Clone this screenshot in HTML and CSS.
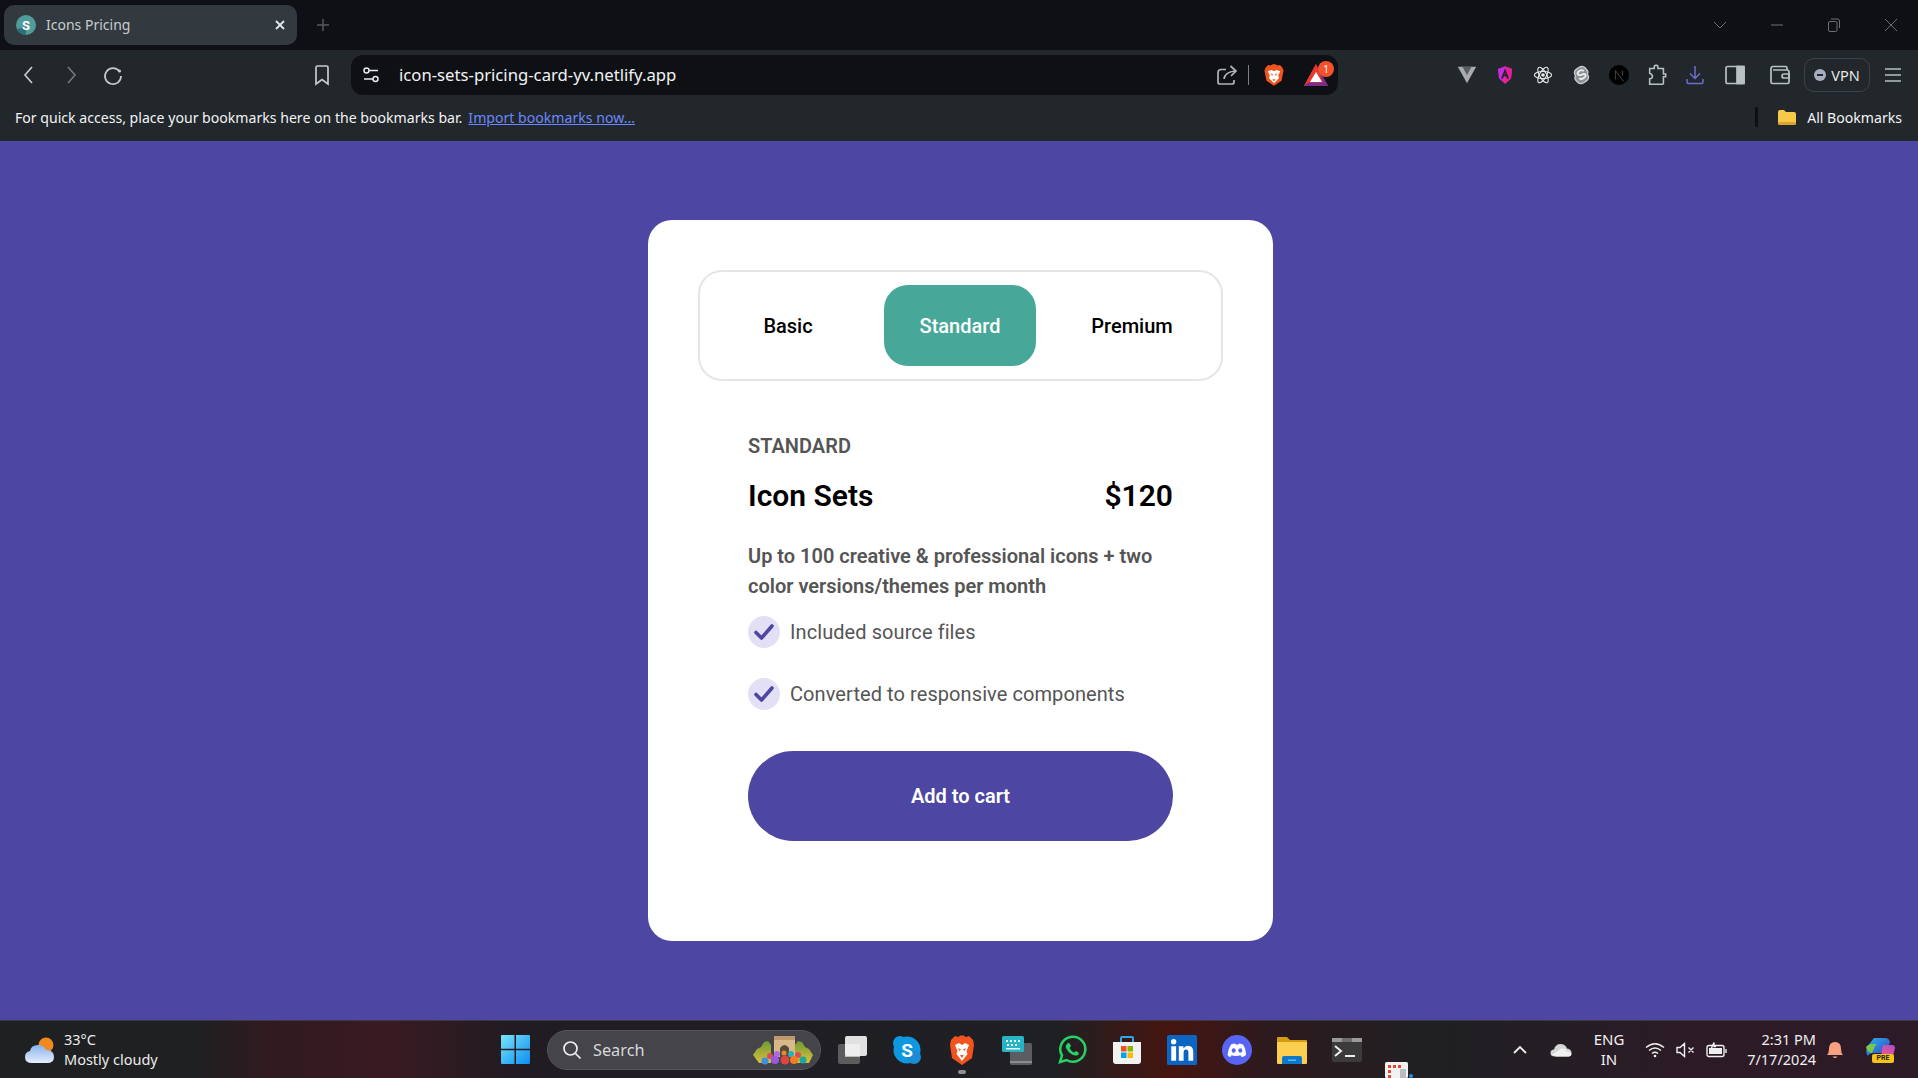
FILE: index.html
```html
<!DOCTYPE html>
<html lang="en">
<head>
  <meta charset="UTF-8">
  <meta name="viewport" content="width=device-width, initial-scale=1.0">
  <title>Icons Pricing</title>
  <link rel="stylesheet" href="styles.css">
</head>
<body>

  <!-- browser tabs -->
  <div class="tabbar">
    <div class="tab">
      <svg class="favicon" viewBox="0 0 20 20"><circle cx="10" cy="10" r="10" fill="#4f9c9a"/><path d="M10 20a10 10 0 0 1-9-6l9-2z" fill="#2f6f78"/><text x="10" y="14.5" text-anchor="middle" class="favicon-s">S</text></svg>
      <span class="tab-title">Icons Pricing</span>
      <svg class="tab-close" viewBox="0 0 12 12"><path d="M2 2l8 8M10 2l-8 8"/></svg>
    </div>
    <svg class="tab-new" viewBox="0 0 14 14"><path d="M7 1v12M1 7h12"/></svg>
    <div class="window-controls">
      <svg class="win-btn" viewBox="0 0 14 14"><path d="M1 4l6 6 6-6"/></svg>
      <svg class="win-btn" viewBox="0 0 14 14"><path d="M1 7h12"/></svg>
      <svg class="win-btn" viewBox="0 0 14 14"><rect x="1.5" y="3.5" width="8.5" height="10" rx="1.5"/><path d="M4 1h6.500q2 0 2 2v7"/></svg>
      <svg class="win-btn" viewBox="0 0 14 14"><path d="M1 1l12 12M13 1L1 13"/></svg>
    </div>
  </div>

  <!-- address bar row -->
  <div class="toolbar">
    <div class="nav-group">
      <span class="nav-btn"><svg class="ico" viewBox="0 0 22 22"><path d="M14 3l-7 8 7 8"/></svg></span>
      <span class="nav-btn dim"><svg class="ico" viewBox="0 0 22 22"><path d="M8 3l7 8-7 8"/></svg></span>
      <span class="nav-btn"><svg class="ico" viewBox="0 0 22 22"><path d="M17.500 7.500A8 8 0 1 0 19 12"/><circle cx="17.500" cy="7" r="1.600" fill="#c6cacd" stroke="none"/></svg></span>
    </div>
    <span class="bookmark-btn"><svg class="ico" viewBox="0 0 22 22"><path d="M5 3.500q0-1.500 1.500-1.500h9q1.500 0 1.500 1.500V20l-6-4.500L5 20z"/></svg></span>
    <div class="addressbar">
      <svg class="site-ico" viewBox="0 0 18 18"><circle cx="4.500" cy="4.500" r="2.500"/><path d="M7 4.500h9M2 13h9"/><circle cx="13.500" cy="13" r="2.500"/></svg>
      <span class="url">icon-sets-pricing-card-yv.netlify.app</span>
      <svg class="ico share" viewBox="0 0 22 22"><path d="M10 5.500H5q-3 0-3 3V18q0 2 2 2h12q2 0 2-2v-2"/><path d="M8 15q1-7 11-8M14.500 2L20 7l-5 5" /></svg>
      <span class="addr-divider"></span>
      <svg class="brave-small" viewBox="0 0 24 26"><path d="M12 26L3 20 .5 8 2 4l3-3 3 .5L10.500 0h3L16 1.500 19 1l3 3 1.500 4L21 20z" fill="#f1541f"/><path d="M4.500 8.500L9 7l3 1.500L15 7l4.500 1.500L17 13.500l1 3-6 6.500-6-6.500 1-3z" fill="#fff"/><path d="M8 11l3 1.500-1.500 1.500zM16 11l-3 1.500 1.500 1.500zM10 18h4l-2 2.500z" fill="#f1541f"/></svg>
      <span class="bat">
        <svg class="bat-ico" viewBox="0 0 24 22"><path d="M12 0l12 22H0z" fill="#e8392c"/><path d="M12 0l12 22H0l4-3.500h15z" fill="#7b2d8f"/><path d="M12 0L0 22l4-3.500L12 4z" fill="#e8392c"/><path d="M12 8l6 10H6z" fill="#fff"/></svg>
        <span class="bat-badge">1</span>
      </span>
    </div>
    <div class="ext-group">
      <span class="ext"><svg class="ext-ico" viewBox="0 0 24 22"><path d="M1 1h22L12 21z" fill="#a9abac"/><path d="M6.500 1L12 11l5.500-10z" fill="#5a5e60"/></svg></span>
      <span class="ext"><svg class="ext-ico angular" viewBox="0 0 20 22"><path d="M10 0L1 3.500l1.500 12L10 22l7.500-6.500 1.500-12z" fill="#c42ce0"/><path d="M10 0v22l7.500-6.500 1.500-12z" fill="#e0218f"/><path d="M10 3L5 15.500h2.500l1-3h3l1 3H15zM9.200 10.500L10 8l.8 2.500z" fill="#1e2226"/><path d="M5.500 16.500h9L10 21z" fill="#ff1a8c"/></svg></span>
      <span class="ext"><svg class="ext-ico react" viewBox="0 0 22 22"><circle cx="11" cy="11" r="2" fill="#e8eaeb" stroke="none"/><ellipse cx="11" cy="11" rx="9.500" ry="3.800"/><ellipse cx="11" cy="11" rx="9.500" ry="3.800" transform="rotate(60 11 11)"/><ellipse cx="11" cy="11" rx="9.500" ry="3.800" transform="rotate(120 11 11)"/></svg></span>
      <span class="ext"><svg class="ext-ico svelte" viewBox="0 0 18 22"><path d="M15 5C13 1.500 9.500 1 7 2.500L4 4.500C1.500 6 1 9.500 3 12c-1 2-.5 4.500 1.500 6C6.500 21 10 21 12 19.500l3-2c2.500-1.500 3-5 1-7.500 1-1.500.5-3.500-1-5z"/><path d="M12 6.500q-2-1.500-4-.5l-2 1.500q-1.500 1.500 0 3 1 1 3 .5l2.500-1q2-.5 2.500 1 .5 1.500-1 2.500l-2 1.500q-2 1-4-.5" class="svelte-s"/></svg></span>
      <span class="ext"><svg class="ext-ico" viewBox="0 0 22 22"><circle cx="11" cy="11" r="11" fill="#000"/><path d="M7 16V6l9 12M15 6v6" fill="none" stroke="#4a4d50" stroke-width="1"/></svg></span>
      <span class="ext"><svg class="ico tone" viewBox="0 0 22 24"><path d="M3 5h5V3q0-1.500 1.500-1.500h1Q12 1.500 12 3v2h6v6h2.500v3H18v7q0 1-1 1H3v-6q3 0 3-2.500T3 10z"/></svg></span>
      <span class="ext"><svg class="ico violet" viewBox="0 0 22 22"><path d="M11 2v12M6 9.500l5 5 5-5M3 15v3q0 1.500 1.500 1.500h13Q19 19.500 19 18v-3"/></svg></span>
      <span class="ext sidebar"><svg class="ico tone" viewBox="0 0 22 22"><rect x="2" y="2.500" width="18" height="17" rx="1.500"/><rect x="13" y="2.500" width="7" height="17" fill="#b8c0c4"/></svg></span>
      <span class="ext wallet"><svg class="ico tone" viewBox="0 0 22 22"><path d="M18 6V4q0-1.500-1.500-1.500H4Q2 2.500 2 5v13q0 1.500 1.500 1.500h15q1.500 0 1.500-1.500V8q0-2-2-2H4"/><path d="M20 10h-5q-2 0-2 2t2 2h5z"/></svg></span>
    </div>
    <div class="vpn-btn"><span class="vpn-dot"></span>VPN</div>
    <svg class="ico menu" viewBox="0 0 18 18"><path d="M1 3h16M1 9h16M1 15h16"/></svg>
  </div>

  <!-- bookmarks bar -->
  <div class="bookmarks">
    <span>For quick access, place your bookmarks here on the bookmarks bar.</span>
    <a class="import-link" href="#">Import bookmarks now...</a>
    <span class="bm-divider"></span>
    <svg class="bm-folder" viewBox="0 0 20 17"><path d="M1 3q0-2 2-2h4l2 2h8q2 0 2 2v9q0 2-2 2H3q-2 0-2-2z" fill="#f7c948"/><path d="M1 13h18v1q0 2-2 2H3q-2 0-2-2z" fill="#d9a52c"/></svg>
    <span>All Bookmarks</span>
  </div>

  <!-- pricing card -->
  <main class="page">
    <section class="card">
      <div class="plan-tabs">
        <button class="plan-tab">Basic</button>
        <button class="plan-tab active">Standard</button>
        <button class="plan-tab">Premium</button>
      </div>
      <div class="plan">
        <p class="plan-name">STANDARD</p>
        <div class="plan-head">
          <h2>Icon Sets</h2>
          <span>$120</span>
        </div>
        <p class="plan-desc">Up to 100 creative &amp; professional icons + two color versions/themes per month</p>
        <ul class="features">
          <li><span class="check"><svg viewBox="0 0 20 20"><path d="M2 10.500l5.500 5.500L18 4"/></svg></span>Included source files</li>
          <li><span class="check"><svg viewBox="0 0 20 20"><path d="M2 10.500l5.500 5.500L18 4"/></svg></span>Converted to responsive components</li>
        </ul>
        <button class="add-btn">Add to cart</button>
      </div>
    </section>
  </main>

  <!-- windows taskbar -->
  <footer class="taskbar">
    <div class="weather">
      <svg class="weather-ico" viewBox="0 0 32 28"><defs><linearGradient id="cloud" x1="0" y1="0" x2="0" y2="1"><stop offset="0" stop-color="#86b2ee"/><stop offset="1" stop-color="#e6eefb"/></linearGradient></defs><circle cx="22" cy="9" r="7.500" fill="#f08a1d"/><path d="M8 27q-7 0-7-6 0-5 5-6 1-6 8-6 6 0 8 5 8 0 8 7 0 6-7 6z" fill="url(#cloud)"/></svg>
      <div class="weather-text">
        <span>33°C</span>
        <span>Mostly cloudy</span>
      </div>
    </div>
    <div class="task-center">
      <svg class="start" viewBox="0 0 29 29"><defs><linearGradient id="winblue" x1="0" y1="0" x2="1" y2="1"><stop offset="0" stop-color="#7be3fb"/><stop offset="1" stop-color="#0a8ff0"/></linearGradient></defs><path d="M0 1q0-1 1-1h12.500v13.700H0zM15 0h13q1 0 1 1v12.700H15zM0 15.300h13.500V29H1q-1 0-1-1zM15 15.300h14V28q0 1-1 1H15z" fill="url(#winblue)"/></svg>
      <div class="search">
        <svg class="search-ico" viewBox="0 0 20 20"><circle cx="8.500" cy="8.500" r="6.500"/><path d="M13.500 13.500l5 5"/></svg>
        <span class="search-text">Search</span>
        <svg class="search-art" viewBox="0 0 60 30"><defs><linearGradient id="bush" x1="0" y1="0" x2="0" y2="1"><stop offset="0" stop-color="#6f9a34"/><stop offset="1" stop-color="#d8c03c"/></linearGradient></defs><path d="M0 20l4-6 4-2 3-5 4-1 3 4v18H6zM60 20l-4-6-4-2-3-5-4-1-3 4v18h14z" fill="url(#bush)"/><path d="M21 3h21v19H21z" fill="#d8b98a"/><path d="M21 1h21v4H21z" fill="#c09a6c"/><path d="M27 22v-9q4.500-6 9 0v9z" fill="#5a4a3c"/><circle cx="17" cy="21" r="3" fill="#d94c55"/><circle cx="24" cy="19" r="3" fill="#a76be0"/><circle cx="31" cy="18" r="2.500" fill="#e68a2e"/><circle cx="38" cy="19" r="3" fill="#27b1b8"/><circle cx="45" cy="20" r="3" fill="#d94c55"/><circle cx="12" cy="26" r="3.500" fill="#3f8fe0"/><circle cx="22" cy="25" r="4" fill="#9a58e2"/><circle cx="32" cy="25" r="4.500" fill="#d9453f"/><circle cx="41" cy="25" r="4" fill="#ef7d22"/><circle cx="50" cy="25" r="3.500" fill="#1ba6a0"/></svg>
      </div>
      <div class="task-icons">
        <span class="task-app"><svg viewBox="0 0 30 30"><rect x="1" y="9" width="22" height="20" rx="2" fill="#5c5c5c"/><rect x="8" y="9" width="15" height="13" fill="#bdbdbd"/><rect x="8" y="1" width="22" height="20" rx="2" fill="#f2f2f2" opacity=".92"/></svg></span>
        <span class="task-app"><svg viewBox="0 0 30 30"><circle cx="15" cy="15" r="13.500" fill="#0e98e0"/><circle cx="8" cy="8" r="7" fill="#0e98e0"/><circle cx="22" cy="22" r="7" fill="#1b8bd6"/><text x="15" y="22" text-anchor="middle" class="skype-s">S</text></svg></span>
        <span class="task-app running"><svg viewBox="0 0 26 30"><path d="M13 30L3 23 1 10l1-5 4-4 3 1 2.500-1.500h3L17 2l3-1 4 4 1 5-2 13z" fill="#f1541f"/><path d="M6 10l4-2 3 2 3-2 4 2-2.500 6 1 3L13 26l-5.500-7 1-3z" fill="#fff"/><path d="M9 13l3 1.500-1.500 1.500zM17 13l-3 1.500 1.500 1.500zM11 20h4l-2 3z" fill="#f1541f"/></svg></span>
        <span class="task-app"><svg viewBox="0 0 30 30"><rect x="8" y="8" width="22" height="22" rx="1.500" fill="#5b5e61"/><rect x="8" y="26" width="22" height="2" fill="#8a8d90"/><rect x="0" y="1" width="22" height="16" rx="1.500" fill="#27b4c6"/><path d="M4 5h2v2H4zM8 5h2v2H8zM12 5h2v2h-2zM16 5h2v2h-2zM5 9h2v2H5zM9 9h2v2H9zM13 9h2v2h-2zM4 13h14v1.500H4z" fill="#e8f9fb"/></svg></span>
        <span class="task-app"><svg class="whatsapp" viewBox="0 0 30 30"><path d="M3 27l2-6.500A12.500 12.500 0 1 1 9.500 25z"/><path d="M10 9q1.500-2 3 0l1 2-1.500 2q1.500 3 4.500 4.500l2-1.500 2 1.200q2 1.500-.5 3-2 1-5.500-.7-4-2-6-6.500-1-2.500 1-4z" class="whatsapp-fill"/></svg></span>
        <span class="task-app"><svg viewBox="0 0 30 30"><path d="M9 7V3q0-1 1-1h10q1 0 1 1v4" fill="none" stroke="#2aa8e8" stroke-width="2"/><path d="M1 7h28v19q0 3-3 3H4q-3 0-3-3z" fill="#f2f2f2"/><rect x="9" y="11" width="5.500" height="5.500" fill="#f25022"/><rect x="15.500" y="11" width="5.500" height="5.500" fill="#7fba00"/><rect x="9" y="17.500" width="5.500" height="5.500" fill="#00a4ef"/><rect x="15.500" y="17.500" width="5.500" height="5.500" fill="#ffb900"/></svg></span>
        <span class="task-app"><svg viewBox="0 0 28 28"><rect width="28" height="28" rx="1.500" fill="#0a66c2"/><rect x="4" y="10.500" width="4.500" height="13.500" fill="#fff"/><circle cx="6.200" cy="6.300" r="2.500" fill="#fff"/><path d="M11 10.500h4.300v2q1.500-2.400 4.200-2.400 5 0 5 5.800V24H20v-7.500q0-3-2.300-3-2.200 0-2.200 3V24H11z" fill="#fff"/></svg></span>
        <span class="task-app"><svg viewBox="0 0 30 30"><circle cx="15" cy="15" r="15" fill="#5865f2"/><path d="M9 9.500q3-1.200 4-1l.5 1h3l.5-1q1 0 4 1 3 4.500 3 10.500-2 1.800-4.500 2l-1-1.700q-4.500 1.300-9 0l-1 1.700Q7 21.800 5.500 20 6 14 9 9.500z" fill="#fff"/><ellipse cx="11.700" cy="15.500" rx="2" ry="2.200" fill="#5865f2"/><ellipse cx="18.300" cy="15.500" rx="2" ry="2.200" fill="#5865f2"/></svg></span>
        <span class="task-app"><svg viewBox="0 0 30 30"><path d="M0 3q0-1 1-1h9l3 3h16q1 0 1 1v5H0z" fill="#d79b13"/><path d="M0 7h30v21q0 1-1 1H1q-1 0-1-1z" fill="#fbcf4f"/><path d="M5 23q0-2 2-2h16q2 0 2 2v6H5z" fill="#0f78c8"/><rect x="11" y="24.500" width="8" height="1.500" fill="#5cb9ee"/></svg></span>
        <span class="task-app"><svg viewBox="0 0 30 26"><rect y="1" width="30" height="24" rx="2" fill="#3b3b3b"/><rect y="1" width="30" height="4" fill="#9a9a9a"/><rect x="10" y="1" width="10" height="4" fill="#6d6d6d"/><path d="M3 9l6 5-6 5" fill="none" stroke="#eee" stroke-width="2"/><rect x="13" y="18" width="10" height="2" fill="#eee"/></svg></span>
        <span class="task-app clipped"><svg viewBox="0 0 28 16"><rect width="23" height="16" rx="1.500" fill="#f2f2f2"/><path d="M3 3h3v3H3zM8 3h3v3H8zM13 3h3v3h-3zM3 8h3v3H3zM3 13h3v3H3z" fill="#e0492a"/><rect x="15" y="7" width="6" height="9" fill="#b9bdc2"/><circle cx="26" cy="14" r="2" fill="#1f8fe0"/></svg></span>
      </div>
    </div>
    <div class="tray">
      <svg class="tray-ico chev" viewBox="0 0 16 16"><path d="M2 11l6-6 6 6"/></svg>
      <svg class="tray-cloud" viewBox="0 0 22 14"><path d="M5 13.500q-4.500 0-4.500-3.500T4 6.500Q5.500 1 10.500 1T17 5.500q4.500.5 4.500 4.500t-3.500 3.500z" fill="#d6d6d6"/><path d="M8 8q2-3 5-2.500 3 .5 4 3l3 .5 1.500 2q-.5 2.500-3.500 2.500H6l-4-2z" fill="#f2f2f2"/></svg>
      <div class="lang"><span>ENG</span><span>IN</span></div>
      <svg class="tray-ico wifi" viewBox="0 0 20 16"><path d="M1 5.500q9-7.500 18 0M4 8.500q6-5 12 0M7 11.500q3-2.500 6 0"/><circle cx="10" cy="14" r="1.300" fill="#f0f0f0" stroke="none"/></svg>
      <svg class="tray-ico vol" viewBox="0 0 20 16"><path d="M1 5.500h3l4.500-4v13l-4.500-4H1zM12.500 5.500l5 5M17.500 5.500l-5 5"/></svg>
      <svg class="tray-ico batt" viewBox="0 0 22 16"><rect x="1" y="3.500" width="17" height="11" rx="2"/><rect x="3" y="6" width="13" height="6" fill="#f0f0f0" stroke="none"/><path d="M20 7v4"/><path d="M5 7l3-6.500v4h2" /></svg>
      <div class="clock"><span>2:31 PM</span><span>7/17/2024</span></div>
      <svg class="bell" viewBox="0 0 18 20"><path d="M1 15q2-2 2-6 0-7 6-7t6 7q0 4 2 6z" fill="#f7a27f"/><path d="M6.500 16.500q2.500 3 5 0z" fill="#f7a27f"/></svg>
      <span class="copilot">
        <svg viewBox="0 0 30 24"><defs><linearGradient id="cp1" x1="0" y1="0" x2="1" y2="1"><stop offset="0" stop-color="#2bb4e8"/><stop offset=".6" stop-color="#2f6fd6"/><stop offset="1" stop-color="#6d3fc8"/></linearGradient><linearGradient id="cp2" x1="0" y1="1" x2="1" y2="0"><stop offset="0" stop-color="#f4a13a"/><stop offset=".5" stop-color="#e8558f"/><stop offset="1" stop-color="#a64fd6"/></linearGradient></defs><path d="M9 0h11q4 0 5 4l-4 11H9q-5 0-6 3-3-4-1-9z" fill="url(#cp1)"/><path d="M1 9q2 6 6 6l3-7q1-2 3-2H8Q3 6 1 9z" fill="#7ac943"/><path d="M18 7h9q3 0 3 3l-2 8q-1 6-6 6H9q5 0 7-5z" fill="url(#cp2)"/></svg>
        <span class="pre">PRE</span>
      </span>
    </div>
  </footer>

</body>
</html>
```

FILE: styles.css
```css
* {
  box-sizing: border-box;
}

html, body {
  height: 100%;
}

body {
  margin: 0;
  display: flex;
  flex-direction: column;
  overflow: hidden;
  font-family: "Roboto", sans-serif;
  background-color: #4d46a3;
}

svg {
  display: block;
  flex: none;
}

/* browser chrome */
.tabbar {
  height: 50px;
  flex: none;
  display: flex;
  align-items: center;
  padding-left: 4px;
  background-color: #0e1015;
}

.tab {
  width: 293px;
  height: 40px;
  display: flex;
  align-items: center;
  padding: 0 12px;
  background-color: #32393f;
  border-radius: 10px;
}

.favicon {
  width: 20px;
  height: 20px;
}

.favicon-s {
  font: 700 13px "Roboto", sans-serif;
  fill: #fff;
}

.tab-title {
  flex: 1;
  margin-left: 10px;
  padding-bottom: 1px;
  font: 14px "Noto Sans", sans-serif;
  color: #c8ccd0;
}

.tab-close {
  width: 12px;
  height: 12px;
  margin-right: -1px;
  fill: none;
  stroke: #e4e6e8;
  stroke-width: 1.800;
}

.tab-new {
  width: 14px;
  height: 14px;
  margin-left: 19px;
  fill: none;
  stroke: #555a5f;
  stroke-width: 1.500;
}

.window-controls {
  margin-left: auto;
  display: flex;
  gap: 43px;
  padding-right: 20px;
}

.win-btn {
  width: 14px;
  height: 14px;
  fill: none;
  stroke: #6b7074;
  stroke-width: 1;
}

.toolbar {
  height: 50px;
  flex: none;
  display: flex;
  align-items: center;
  padding-left: 8px;
  background-color: #22272b;
}

.nav-group {
  display: flex;
}

.nav-btn {
  width: 42px;
  display: flex;
  justify-content: center;
}

.nav-btn.dim .ico {
  stroke: #72777b;
}

.ico {
  width: 22px;
  height: 22px;
  fill: none;
  stroke: #c6cacd;
  stroke-width: 1.700;
}

.ico.tone {
  stroke: #b8c0c4;
}

.ico.violet {
  stroke: #6f6cd0;
  stroke-width: 1.500;
}

.bookmark-btn {
  margin-left: 177px;
  margin-right: 18px;
}

.addressbar {
  width: 987px;
  height: 40px;
  display: flex;
  align-items: center;
  padding-left: 11px;
  background-color: #0e1014;
  border-radius: 12px;
}

.site-ico {
  width: 18px;
  height: 18px;
  fill: none;
  stroke: #e6e8ea;
  stroke-width: 1.500;
}

.url {
  flex: 1;
  margin-left: 19px;
  padding-bottom: 1px;
  font: 16.700px "Noto Sans", sans-serif;
  color: #f2f3f4;
}

.ico.share {
  stroke: #b0b4b8;
}

.addr-divider {
  width: 1px;
  height: 20px;
  margin: 0 15px 0 10px;
  background-color: #7b8084;
}

.brave-small {
  width: 20px;
  height: 22px;
}

.bat {
  position: relative;
  margin: 0 10px 0 20px;
}

.bat-ico {
  width: 24px;
  height: 22px;
}

.bat-badge {
  position: absolute;
  top: -3px;
  right: -6px;
  width: 16px;
  height: 16px;
  border-radius: 50%;
  background-color: #f4522d;
  color: #fff;
  font: 10px/16px "Noto Sans", sans-serif;
  text-align: center;
}

.ext-group {
  display: flex;
  margin-left: 110px;
}

.ext {
  width: 38px;
  height: 30px;
  display: flex;
  align-items: center;
  justify-content: center;
}

.ext.sidebar {
  margin-left: 2px;
}

.ext.wallet {
  margin-left: 7px;
}

.ext-ico {
  width: 20px;
  height: 20px;
}

.ext-ico.angular {
  width: 16px;
  height: 18px;
}

.ext-ico.react {
  fill: none;
  stroke: #e8eaeb;
  stroke-width: 1.200;
}

.ext-ico.svelte {
  fill: #8f9294;
  stroke: #c8cacb;
  stroke-width: 1.500;
}

.svelte-s {
  fill: none;
  stroke: #eceeef;
  stroke-width: 2;
}

.vpn-btn {
  width: 66px;
  height: 34px;
  margin-left: 5px;
  display: flex;
  align-items: center;
  justify-content: center;
  gap: 5px;
  border: 1px solid #3c4348;
  border-radius: 10px;
  font: 14.500px "Noto Sans", sans-serif;
  color: #e6e8ea;
}

.vpn-dot {
  width: 12px;
  height: 12px;
  border-radius: 50%;
  background-color: #a8adbf;
  position: relative;
}

.vpn-dot::after {
  content: "";
  position: absolute;
  left: 3px;
  top: 5px;
  width: 6px;
  height: 2px;
  background-color: #22272b;
}

.ico.menu {
  width: 18px;
  height: 18px;
  margin-left: 14px;
  stroke: #b8c0c4;
  stroke-width: 1.500;
}

.bookmarks {
  height: 41px;
  flex: none;
  display: flex;
  align-items: center;
  padding: 0 16px 7px 15px;
  font: 14.100px "Noto Sans", sans-serif;
  color: #f2f3f4;
  background-color: #22272b;
}

.import-link {
  margin-left: 6px;
  color: #6a87ff;
}

.bm-divider {
  width: 3px;
  height: 20px;
  margin-left: auto;
  margin-right: 19px;
  background-color: #0e1014;
}

.bm-folder {
  width: 20px;
  height: 17px;
  margin-right: 10px;
}

/* pricing card */
.page {
  flex: 1;
  display: flex;
  justify-content: center;
  align-items: flex-start;
  padding-top: 79px;
  padding-left: 3px;
}

.card {
  width: 625px;
  height: 721px;
  padding: 50px;
  background-color: #fff;
  border-radius: 24px;
}

.plan-tabs {
  display: grid;
  grid-template-columns: repeat(3, 152px);
  gap: 20px;
  justify-content: center;
  padding: 13px 1px 13px 0;
  height: 111px;
  border: 2px solid #e5e5e5;
  border-radius: 24px;
}

.plan-tab {
  border: none;
  background: none;
  border-radius: 24px;
  font: 500 20px "Roboto", sans-serif;
  color: #000;
  padding: 0;
}

.plan-tab.active {
  background-color: #47a899;
  color: #fff;
}

.plan {
  padding: 53px 50px 0;
}

.plan-name {
  margin: 0;
  font-size: 20px;
  font-weight: 600;
  line-height: 24px;
  color: #555;
}

.plan-head {
  display: flex;
  justify-content: space-between;
  margin-top: 20px;
  font-size: 30px;
  font-weight: 600;
  line-height: 36px;
  color: #000;
}

.plan-head h2 {
  margin: 0;
  font: inherit;
}

.plan-desc {
  margin: 27px 0 0;
  font-size: 20px;
  font-weight: 600;
  line-height: 30px;
  color: #555;
}

.features {
  list-style: none;
  margin: 0;
  padding: 0;
}

.features li {
  display: flex;
  align-items: center;
  gap: 10px;
  margin-top: 15px;
  font-size: 20px;
  line-height: 32px;
  letter-spacing: 0.08px;
  color: #555;
}

.features li:last-child {
  margin-top: 30px;
}

.check {
  width: 32px;
  height: 32px;
  flex: none;
  display: flex;
  align-items: center;
  justify-content: center;
  background-color: #e3dff5;
  border-radius: 50%;
}

.check svg {
  width: 20px;
  height: 20px;
  fill: none;
  stroke: #4d46a3;
  stroke-width: 3.600;
  stroke-linecap: round;
  stroke-linejoin: round;
}

.add-btn {
  display: block;
  width: 100%;
  height: 90px;
  margin-top: 41px;
  border: none;
  border-radius: 45px;
  background-color: #4d46a3;
  color: #fff;
  font: 600 20px "Roboto", sans-serif;
}

/* taskbar */
.taskbar {
  height: 58px;
  flex: none;
  display: flex;
  align-items: center;
  border-top: 1px solid #3a3a42;
  color: #f0f0f0;
  background: linear-gradient(90deg, #1f2022 0%, #1f2022 10%, #301a20 14%, #3a1a22 20%, #201c22 27%, #1f2024 55%, #45150f 61%, #2d1a1e 66%, #1f2023 75%, #2c1b26 88%, #2c1b26 100%);
}

.weather {
  width: 501px;
  display: flex;
  align-items: center;
  padding-left: 24px;
  gap: 8px;
}

.weather-ico {
  width: 32px;
  height: 28px;
}

.weather-text {
  display: flex;
  flex-direction: column;
  padding-bottom: 2px;
  font: 14.500px/20px "Noto Sans", sans-serif;
  color: #ececec;
}

.task-center {
  display: flex;
  align-items: center;
}

.start {
  width: 29px;
  height: 29px;
}

.search {
  width: 274px;
  height: 40px;
  margin-left: 17px;
  display: flex;
  align-items: center;
  padding-left: 14px;
  background-color: #45444a;
  border: 1px solid #55555b;
  border-radius: 20px;
}

.search-ico {
  width: 20px;
  height: 20px;
  fill: none;
  stroke: #f0f0f0;
  stroke-width: 1.700;
}

.search-text {
  flex: 1;
  margin-left: 11px;
  font: 16.300px "Noto Sans", sans-serif;
  color: #d8d8d8;
}

.search-art {
  width: 60px;
  height: 30px;
  margin-right: 7px;
}

.task-icons {
  display: flex;
  margin-left: 3px;
}

.task-app {
  position: relative;
  width: 55px;
  height: 30px;
  display: flex;
  align-items: center;
  justify-content: center;
}

.task-app svg {
  width: 30px;
  height: 30px;
}

.task-app.running::after {
  content: "";
  position: absolute;
  left: 24px;
  top: 35px;
  width: 8px;
  height: 4px;
  border-radius: 2px;
  background-color: #8f8f8f;
}

.whatsapp {
  fill: none;
  stroke: #25d366;
  stroke-width: 2.500;
}

.whatsapp-fill {
  fill: #25d366;
  stroke: none;
}

.skype-s {
  font: 700 19px "Roboto", sans-serif;
  fill: #fff;
}

/* half hidden icon poking up from below the taskbar */
.task-app.clipped {
  width: 28px;
  height: 16px;
  margin-left: 11px;
  align-self: flex-end;
  top: 13px;
}

.task-app.clipped svg {
  width: 28px;
  height: 16px;
}

.tray {
  margin-left: auto;
  display: flex;
  align-items: center;
  padding-right: 22px;
}

.tray-ico {
  width: 20px;
  height: 16px;
  fill: none;
  stroke: #f0f0f0;
  stroke-width: 1.400;
}

.tray-ico.chev {
  width: 16px;
  stroke-width: 1.800;
}

.tray-cloud {
  width: 22px;
  height: 14px;
  margin-left: 22px;
}

.lang {
  width: 40px;
  margin-left: 17px;
  padding-bottom: 2px;
  display: flex;
  flex-direction: column;
  align-items: center;
  font: 15px/20px "Noto Sans", sans-serif;
}

.tray-ico.wifi {
  margin-left: 16px;
}

.tray-ico.vol {
  margin-left: 11px;
}

.tray-ico.batt {
  margin-left: 10px;
  width: 22px;
}

.clock {
  width: 85px;
  margin-left: 3px;
  padding-bottom: 2px;
  display: flex;
  flex-direction: column;
  align-items: flex-end;
  font: 14.500px/20px "Noto Sans", sans-serif;
}

.bell {
  width: 18px;
  height: 20px;
  margin-left: 10px;
}

.copilot {
  position: relative;
  margin-left: 21px;
  margin-right: 1px;
}

.copilot svg {
  width: 30px;
  height: 24px;
}

.pre {
  position: absolute;
  left: 7px;
  top: 16px;
  width: 22px;
  height: 9px;
  background-color: #f6c21c;
  border-radius: 2px;
  color: #222;
  font: 700 7px/9px "Roboto", sans-serif;
  text-align: center;
}
```
